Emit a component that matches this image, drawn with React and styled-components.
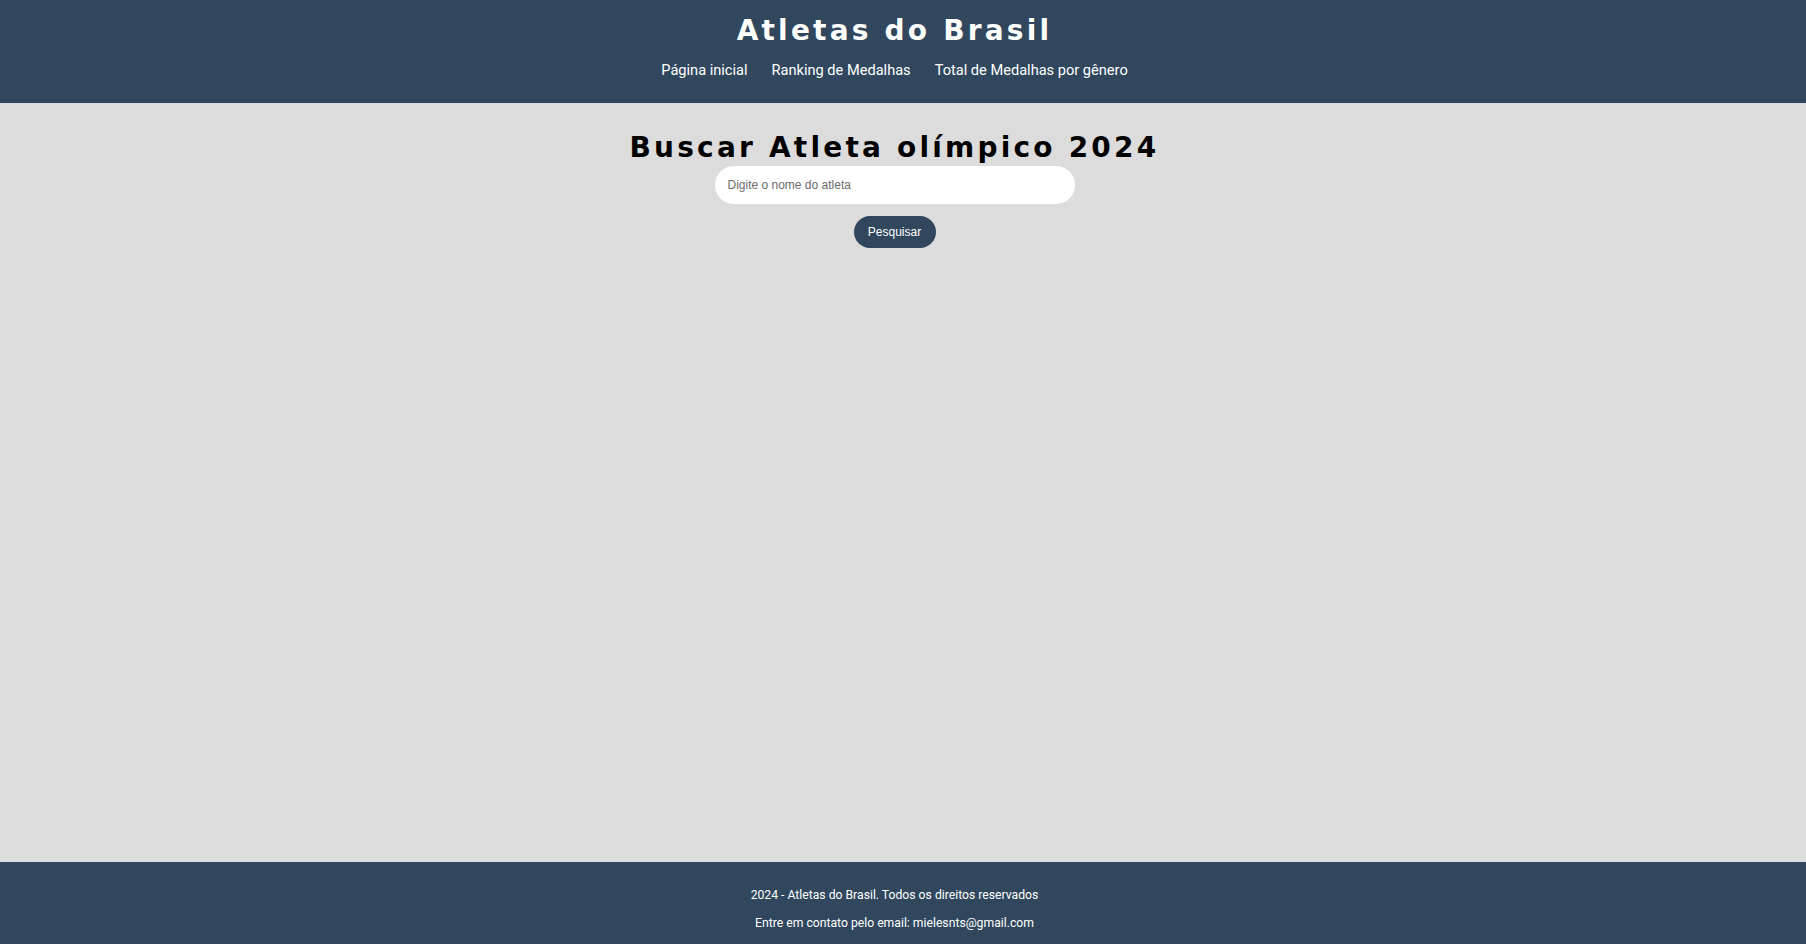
import React from "react";
import styled, { createGlobalStyle } from "styled-components";

const GlobalStyle = createGlobalStyle`
  * { box-sizing: border-box; }
  html, body { margin: 0; padding: 0; }
  body {
    background: #dcdcdc;
    font-family: "DejaVu Sans", "Liberation Sans", sans-serif;
  }
`;

const Page = styled.div`
  min-height: 100vh;
  display: flex;
  flex-direction: column;
`;

const Header = styled.header`
  background: #30475e;
  height: 103px;
  display: flex;
  flex-direction: column;
  align-items: center;
  padding: 14px 17px 0 0;
`;

const SiteTitle = styled.h1`
  margin: 0;
  color: #ffffff;
  font-family: "DejaVu Sans", sans-serif;
  font-weight: 700;
  font-size: 28px;
  line-height: 34px;
  letter-spacing: 3.2px;
`;

const Nav = styled.nav`
  display: flex;
  gap: 24px;
  margin-top: 13px;
`;

const NavLink = styled.a`
  color: #ffffff;
  font-family: "Roboto", sans-serif;
  font-size: 14.6px;
  text-decoration: none;
  cursor: pointer;
`;

const Main = styled.main`
  flex: 1;
  display: flex;
  flex-direction: column;
  align-items: center;
  padding: 28px 17px 0 0;
`;

const SearchTitle = styled.h2`
  margin: 0 0 1px;
  color: #000000;
  font-family: "DejaVu Sans", sans-serif;
  font-weight: 700;
  font-size: 28px;
  line-height: 34px;
  letter-spacing: 3.2px;
`;

const SearchInput = styled.input`
  width: 360px;
  height: 38px;
  border: none;
  border-radius: 19px;
  background: #ffffff;
  padding: 0 13px;
  font-family: "Liberation Sans", Arial, sans-serif;
  font-size: 12px;
  outline: none;
  &::placeholder { color: #6b6b6b; }
`;

const SearchButton = styled.button`
  margin-top: 12px;
  width: 82px;
  height: 32px;
  border: none;
  border-radius: 16px;
  background: #30475e;
  color: #ffffff;
  font-family: "Liberation Sans", Arial, sans-serif;
  font-size: 12px;
  cursor: pointer;
`;

const Footer = styled.footer`
  background: #30475e;
  height: 82px;
  display: flex;
  flex-direction: column;
  align-items: center;
  padding: 26px 17px 0 0;
  gap: 14px;
`;

const FooterText = styled.p`
  margin: 0;
  color: #ffffff;
  font-family: "Roboto", sans-serif;
  font-size: 12.2px;
  line-height: 14px;
`;

export default function App() {
  return (
    <Page>
      <GlobalStyle />
      <Header>
        <SiteTitle>Atletas do Brasil</SiteTitle>
        <Nav>
          <NavLink>Página inicial</NavLink>
          <NavLink>Ranking de Medalhas</NavLink>
          <NavLink>Total de Medalhas por gênero</NavLink>
        </Nav>
      </Header>
      <Main>
        <SearchTitle>Buscar Atleta olímpico 2024</SearchTitle>
        <SearchInput placeholder="Digite o nome do atleta" />
        <SearchButton>Pesquisar</SearchButton>
      </Main>
      <Footer>
        <FooterText>2024 - Atletas do Brasil. Todos os direitos reservados</FooterText>
        <FooterText>Entre em contato pelo email: mielesnts@gmail.com</FooterText>
      </Footer>
    </Page>
  );
}
